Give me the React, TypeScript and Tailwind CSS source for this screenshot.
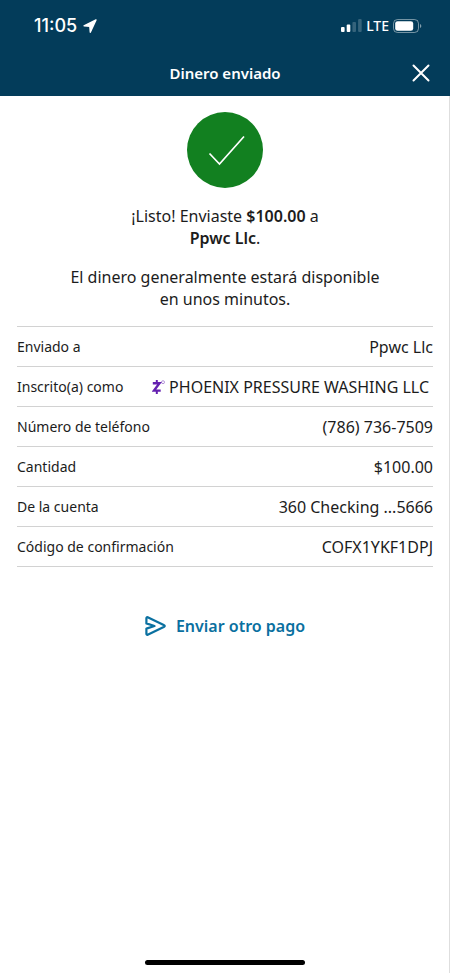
import type { ReactNode } from 'react'

interface DetailRow {
  label: string
  value: ReactNode
}

const DETAILS: DetailRow[] = [
  { label: 'Enviado a', value: 'Ppwc Llc' },
  {
    label: 'Inscrito(a) como',
    value: (
      <span className="flex items-center justify-end gap-1 pr-1">
        <ZelleMark />
        PHOENIX PRESSURE WASHING LLC
      </span>
    ),
  },
  { label: 'Número de teléfono', value: '(786) 736-7509' },
  { label: 'Cantidad', value: '$100.00' },
  { label: 'De la cuenta', value: '360 Checking ...5666' },
  { label: 'Código de confirmación', value: 'COFX1YKF1DPJ' },
]

export default function App() {
  return (
    <div className="flex min-h-screen flex-col bg-white font-['Noto_Sans',sans-serif] text-[#1c1c1c]">
      <header className="bg-[#033c5a] text-white">
        <StatusBar />
        <div className="grid h-[45px] grid-cols-[1fr_auto_1fr] items-center px-5 pb-px">
          <h1 className="col-start-2 text-[15px] leading-5 font-semibold">Dinero enviado</h1>
          <button type="button" aria-label="Cerrar" className="justify-self-end">
            <svg width="18" height="18" viewBox="0 0 18 18" fill="none" stroke="currentColor" strokeWidth="2" strokeLinecap="round">
              <path d="M1.5 1.5l15 15M16.5 1.5l-15 15" />
            </svg>
          </button>
        </div>
      </header>

      <main className="flex grow flex-col border-r border-[#dedede] pt-4 pr-4 pl-[17px]">
        <svg className="self-center" width="76" height="76" viewBox="0 0 76 76" fill="none">
          <circle cx="38" cy="38" r="38" fill="#128020" />
          <path d="M22.5 41.5L32.5 52L57 24.5" stroke="#fff" strokeWidth="1.7" />
        </svg>

        <div className="mt-[17px] text-center text-base leading-[22px]">
          <p>
            ¡Listo! Enviaste <strong className="font-semibold">$100.00</strong> a
            <br />
            <strong className="font-semibold">Ppwc Llc</strong>.
          </p>
          <p className="mt-[17px]">
            El dinero generalmente estará disponible
            <br />
            en unos minutos.
          </p>
        </div>

        <dl className="mt-4 border-t border-[#d2d2d2]">
          {DETAILS.map(({ label, value }) => (
            <div key={label} className="flex h-10 items-center justify-between border-b border-[#d2d2d2]">
              <dt className="text-sm whitespace-nowrap">{label}</dt>
              <dd className="text-right text-base whitespace-nowrap">{value}</dd>
            </div>
          ))}
        </dl>

        <button type="button" className="mt-[47px] flex items-center gap-2.5 self-center font-semibold text-[#0a70a0]">
          <SendIcon />
          Enviar otro pago
        </button>
      </main>

      <footer className="flex justify-center border-r border-[#dedede] pb-2">
        <div className="h-[5px] w-40 rounded-full bg-black" />
      </footer>
    </div>
  )
}

function StatusBar() {
  return (
    <div className="flex h-[51px] items-center justify-between pr-7 pl-[34px] font-['Inter',sans-serif]">
      <div className="flex items-center gap-1.5">
        <span className="text-lg font-medium">11:05</span>
        <svg width="14" height="14" viewBox="0 0 14 14" fill="currentColor" stroke="currentColor" strokeWidth="1.4" strokeLinejoin="round">
          <path d="M13 1L1 6.8L6.8 7.3L7.3 13.2z" />
        </svg>
      </div>
      <div className="flex items-center gap-1">
        <svg width="21" height="13" viewBox="0 0 21 13" fill="currentColor">
          <rect x="0" y="8" width="3.6" height="5" rx="1" />
          <rect x="5.7" y="5.5" width="3.6" height="7.5" rx="1" />
          <rect x="11.4" y="3" width="3.6" height="10" rx="1" opacity=".2" />
          <rect x="17.1" y="0" width="3.6" height="13" rx="1" opacity=".2" />
        </svg>
        <span className="font-['Noto_Sans',sans-serif] text-sm font-medium">LTE</span>
        <svg width="29" height="14" viewBox="0 0 29 14" fill="currentColor">
          <rect x=".5" y=".5" width="25" height="13" rx="4" fill="none" stroke="currentColor" opacity=".45" />
          <rect x="2.2" y="2.2" width="18" height="9.6" rx="2.4" />
          <path d="M27 5c1.8.6 1.8 3.4 0 4z" opacity=".5" />
        </svg>
      </div>
    </div>
  )
}

function ZelleMark() {
  return (
    <svg width="13" height="14" viewBox="0 0 13 14" fill="none" stroke="#6420b0">
      <path d="M.8 3.2h6.7L2 10.6h6.7" strokeWidth="2.4" />
      <path d="M4.8 0v3M4.8 11v3" strokeWidth="2" />
      <circle cx="11" cy="2.2" r="1.5" strokeWidth=".9" opacity=".5" />
    </svg>
  )
}

function SendIcon() {
  return (
    <svg width="21" height="20" viewBox="0 0 21 20" fill="none" stroke="currentColor" strokeWidth="2.2" strokeLinejoin="round" strokeLinecap="round">
      <path d="M1.4 7.4V2.2c0-.8.5-1.200 1.300-.9L19.200 9.300c.7.3.7 1.100 0 1.400L2.700 18.700c-.8.3-1.300-.1-1.300-.9V12.600L9.500 10z" />
    </svg>
  )
}
